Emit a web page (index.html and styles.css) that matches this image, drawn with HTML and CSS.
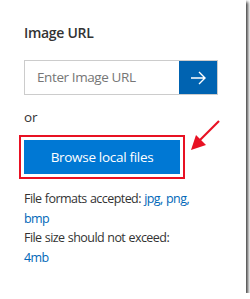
FILE: index.html
```html
<!DOCTYPE html>
<html>
<head>
<meta charset="utf-8">
<link rel="stylesheet" href="styles.css">
</head>
<body>
<div class="panel">
  <div class="title">Image URL</div>
  <div class="url-row">
    <div class="url-input">Enter Image URL</div>
    <div class="url-go">
      <svg width="16" height="14" viewBox="0 0 16 14"><path d="M1 7H15M9 1L15 7L9 13" fill="none" stroke="#fff" stroke-width="1.4"/></svg>
    </div>
  </div>
  <div class="or">or</div>
  <div class="highlight">
    <div class="browse">Browse local files</div>
  </div>
  <div class="info">
    <div>File formats accepted: <span class="link">jpg, png,</span></div>
    <div class="link">bmp</div>
    <div>File size should not exceed:</div>
    <div class="link">4mb</div>
  </div>
  <svg class="pointer" width="34" height="34" viewBox="0 0 34 34">
    <path d="M31 2L10 23" stroke="#e81123" stroke-width="2.2" fill="none"/>
    <path d="M3 31L8 16L18 26Z" fill="#e81123"/>
  </svg>
</div>
</body>
</html>
```
FILE: styles.css
```css
html, body { margin: 0; padding: 0; background: #fff; }
body { font-family: "Open Sans", "Noto Sans", sans-serif; color: #333; }
.panel {
  position: relative;
  width: 246px;
  height: 293px;
  background: #fff;
  box-shadow: 2px 2px 3px rgba(0,0,0,0.75);
  padding: 23px 0 0 24px;
  box-sizing: border-box;
}
.title { font-size: 14px; font-weight: 600; line-height: 20px; color: #333; letter-spacing: -0.3px; }
.url-row { display: flex; margin-top: 17px; width: 194px; height: 35px; box-sizing: border-box; border: 1px solid #ccc; }
.url-input { flex: 1; color: #767676; font-size: 13.5px; padding-left: 12px; line-height: 33px; letter-spacing: -0.4px; }
.url-go { width: 38px; background: #0063b1; display: flex; align-items: center; justify-content: center; }
.or { font-size: 13.5px; line-height: 20px; margin-top: 12px; }
.highlight { display: inline-block; margin-left: -5px; margin-top: 8px; border: 2px solid #e81123; padding: 3px; }
.browse { width: 156px; height: 34px; background: #0078d4; color: #fff; font-size: 13.5px; line-height: 34px; text-align: center; font-weight: 500; letter-spacing: -0.3px; }
.info { margin-top: 10px; font-size: 12.5px; line-height: 19.5px; letter-spacing: -0.55px; word-spacing: 0.5px; }
.link { color: #0067b8; }
.pointer { position: absolute; left: 188px; top: 119px; }
```
